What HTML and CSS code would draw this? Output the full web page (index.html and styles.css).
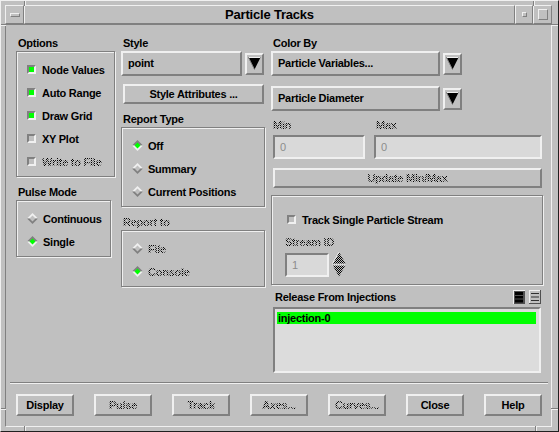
FILE: index.html
```html
<!DOCTYPE html>
<html lang="en">
<head>
  <meta charset="UTF-8" />
  <title>Particle Tracks</title>
  <link rel="stylesheet" href="styles.css">
</head>
<body>

  <div class="window">
    <!-- frame corner marks -->
    <span class="notch notch-v" style="left:23px; top:0;"></span>
    <span class="notch notch-v" style="left:532px; top:0;"></span>
    <span class="notch notch-v notch-b" style="left:23px;"></span>
    <span class="notch notch-v notch-b" style="left:534px;"></span>
    <span class="notch notch-h" style="top:23px; left:0;"></span>
    <span class="notch notch-h notch-r" style="top:23px;"></span>
    <span class="notch notch-h" style="top:407px; left:0;"></span>
    <span class="notch notch-h notch-r" style="top:407px;"></span>

    <!-- Title bar -->
    <div class="titlebar">
      <div class="tb-btn tb-menu"><span class="bevel menu-glyph"></span></div>
      <div class="tb-title">Particle Tracks</div>
      <div class="tb-btn tb-min"><span class="bevel min-glyph"></span></div>
      <div class="tb-btn tb-max"><span class="bevel max-glyph"></span></div>
    </div>

    <div class="dialog">
      <div class="main">

        <!-- Column 1 -->
        <div class="col">
          <div class="label">Options</div>
          <div class="group">
            <div class="row"><span class="check on"></span>Node Values</div>
            <div class="row"><span class="check on"></span>Auto Range</div>
            <div class="row"><span class="check on"></span>Draw Grid</div>
            <div class="row"><span class="check"></span>XY Plot</div>
            <div class="row"><span class="check"></span><span class="dis">Write to File</span></div>
          </div>

          <div class="label label-gap">Pulse Mode</div>
          <div class="group group-pulse">
            <div class="row">
              <svg class="radio" viewBox="0 0 11 11"><polygon class="rt" points="5.5,0 11,5.5 0,5.5"/><polygon class="rb" points="0,5.5 11,5.5 5.5,11"/><polygon class="rc" points="5.5,2.5 8.5,5.5 5.5,8.5 2.5,5.5"/></svg>
              Continuous
            </div>
            <div class="row">
              <svg class="radio on" viewBox="0 0 11 11"><polygon class="rt" points="5.5,0 11,5.5 0,5.5"/><polygon class="rb" points="0,5.5 11,5.5 5.5,11"/><polygon class="rc" points="5.5,2.5 8.5,5.5 5.5,8.5 2.5,5.5"/></svg>
              Single
            </div>
          </div>
        </div>

        <!-- Column 2 -->
        <div class="col">
          <div class="label">Style</div>
          <div class="option">
            <div class="option-field field-style">point</div>
            <div class="option-arrow">
              <svg width="13" height="13" viewBox="0 0 13 13"><polygon points="0.5,0.5 12.5,0.5 6.5,12.5" fill="#000"/><polyline points="0.5,0.5 6.5,12.5" stroke="#808080" fill="none"/><line x1="1" y1="0.5" x2="12" y2="0.5" stroke="#f0f0f0"/></svg>
            </div>
          </div>
          <div class="btn btn-attr">Style Attributes ...</div>

          <div class="label label-gap">Report Type</div>
          <div class="group">
            <div class="row">
              <svg class="radio on" viewBox="0 0 11 11"><polygon class="rt" points="5.5,0 11,5.5 0,5.5"/><polygon class="rb" points="0,5.5 11,5.5 5.5,11"/><polygon class="rc" points="5.5,2.5 8.5,5.5 5.5,8.5 2.5,5.5"/></svg>
              Off
            </div>
            <div class="row">
              <svg class="radio" viewBox="0 0 11 11"><polygon class="rt" points="5.5,0 11,5.5 0,5.5"/><polygon class="rb" points="0,5.5 11,5.5 5.5,11"/><polygon class="rc" points="5.5,2.5 8.5,5.5 5.5,8.5 2.5,5.5"/></svg>
              Summary
            </div>
            <div class="row">
              <svg class="radio" viewBox="0 0 11 11"><polygon class="rt" points="5.5,0 11,5.5 0,5.5"/><polygon class="rb" points="0,5.5 11,5.5 5.5,11"/><polygon class="rc" points="5.5,2.5 8.5,5.5 5.5,8.5 2.5,5.5"/></svg>
              Current Positions
            </div>
          </div>

          <div class="label label-gap"><span class="dis">Report to</span></div>
          <div class="group">
            <div class="row">
              <svg class="radio" viewBox="0 0 11 11"><polygon class="rt" points="5.5,0 11,5.5 0,5.5"/><polygon class="rb" points="0,5.5 11,5.5 5.5,11"/><polygon class="rc" points="5.5,2.5 8.5,5.5 5.5,8.5 2.5,5.5"/></svg>
              <span class="dis">File</span>
            </div>
            <div class="row">
              <svg class="radio on" viewBox="0 0 11 11"><polygon class="rt" points="5.5,0 11,5.5 0,5.5"/><polygon class="rb" points="0,5.5 11,5.5 5.5,11"/><polygon class="rc" points="5.5,2.5 8.5,5.5 5.5,8.5 2.5,5.5"/></svg>
              <span class="dis">Console</span>
            </div>
          </div>
        </div>

        <!-- Column 3 -->
        <div class="col">
          <div class="label">Color By</div>
          <div class="option">
            <div class="option-field field-color">Particle Variables...</div>
            <div class="option-arrow">
              <svg width="13" height="13" viewBox="0 0 13 13"><polygon points="0.5,0.5 12.5,0.5 6.5,12.5" fill="#000"/><polyline points="0.5,0.5 6.5,12.5" stroke="#808080" fill="none"/><line x1="1" y1="0.5" x2="12" y2="0.5" stroke="#f0f0f0"/></svg>
            </div>
          </div>
          <div class="option option-second">
            <div class="option-field field-color">Particle Diameter</div>
            <div class="option-arrow">
              <svg width="13" height="13" viewBox="0 0 13 13"><polygon points="0.5,0.5 12.5,0.5 6.5,12.5" fill="#000"/><polyline points="0.5,0.5 6.5,12.5" stroke="#808080" fill="none"/><line x1="1" y1="0.5" x2="12" y2="0.5" stroke="#f0f0f0"/></svg>
            </div>
          </div>

          <div class="minmax-labels">
            <div class="label mm-min"><span class="dis">Min</span></div>
            <div class="label"><span class="dis">Max</span></div>
          </div>
          <div class="minmax">
            <div class="field field-min"><span class="field-text">0</span></div>
            <div class="field field-max"><span class="field-text">0</span></div>
          </div>
          <div class="btn btn-update"><span class="dis">Update Min/Max</span></div>

          <div class="group group-stream">
            <div class="row"><span class="check"></span>Track Single Particle Stream</div>
            <div class="label stream-label"><span class="dis">Stream ID</span></div>
            <div class="stream-row">
              <div class="field field-stream"><span class="field-text">1</span></div>
              <svg class="spinner" width="14" height="25" viewBox="0 0 14 25">
                <defs>
                  <pattern id="stip" width="2" height="2" patternUnits="userSpaceOnUse">
                    <rect width="2" height="2" fill="#c0c0c0"/>
                    <rect width="1" height="1" fill="#000"/>
                    <rect x="1" y="1" width="1" height="1" fill="#000"/>
                  </pattern>
                </defs>
                <polygon points="7,0 13.5,11.5 0.5,11.5" fill="url(#stip)"/>
                <polyline points="0.5,11.5 7,0" stroke="#f0f0f0" fill="none"/>
                <polygon points="0.5,13 13.5,13 7,24.5" fill="url(#stip)"/>
                <line x1="0.5" y1="13" x2="13.5" y2="13" stroke="#f0f0f0"/>
              </svg>
            </div>
          </div>

          <div class="list-head">
            <div class="label">Release From Injections</div>
            <div class="list-icons">
              <svg width="12" height="14" viewBox="0 0 12 14">
                <rect width="12" height="14" fill="#505050"/>
                <rect x="0" y="0" width="12" height="1" fill="#f0f0f0"/>
                <rect x="0" y="0" width="1" height="14" fill="#f0f0f0"/>
                <rect x="2" y="2" width="8" height="3" fill="#000"/>
                <rect x="2" y="6" width="8" height="2.5" fill="#000"/>
                <rect x="2" y="9.5" width="8" height="3" fill="#000"/>
              </svg>
              <svg width="12" height="14" viewBox="0 0 12 14">
                <rect width="12" height="14" fill="#c0c0c0"/>
                <rect x="0" y="0" width="12" height="1" fill="#f0f0f0"/>
                <rect x="0" y="0" width="1" height="14" fill="#f0f0f0"/>
                <rect x="11" y="0" width="1" height="14" fill="#505050"/>
                <rect x="0" y="13" width="12" height="1" fill="#505050"/>
                <rect x="2" y="3" width="8" height="1" fill="#303030"/>
                <rect x="2" y="6.5" width="8" height="1" fill="#303030"/>
                <rect x="2" y="10" width="8" height="1" fill="#303030"/>
              </svg>
            </div>
          </div>
          <div class="listbox">
            <div class="list-item selected">injection-0</div>
          </div>
        </div>

      </div>

      <div class="separator"></div>

      <div class="actions">
        <div class="btn btn-action">Display</div>
        <div class="btn btn-action"><span class="dis">Pulse</span></div>
        <div class="btn btn-action"><span class="dis">Track</span></div>
        <div class="btn btn-action"><span class="dis">Axes...</span></div>
        <div class="btn btn-action"><span class="dis">Curves...</span></div>
        <div class="btn btn-action">Close</div>
        <div class="btn btn-action">Help</div>
      </div>
    </div>
  </div>

</body>
</html>
```

FILE: styles.css
```css
body {
  margin: 0;
  background-color: #c0c0c0;
  font-family: "Liberation Sans", Arial, sans-serif;
  font-size: 11px;
  font-weight: bold;
  letter-spacing: -0.25px;
  color: #000;
}

.window {
  position: relative;
  width: 559px;
  height: 432px;
  box-sizing: border-box;
  background: #c0c0c0;
  border: 1px solid;
  border-color: #f0f0f0 #202020 #202020 #f0f0f0;
  padding: 4px 6px 4px 4px;
  display: flex;
  flex-direction: column;
}

/* little resize-corner marks on the frame */
.notch {
  position: absolute;
  display: block;
}
.notch-v {
  width: 1px;
  height: 5px;
  background: #808080;
  box-shadow: 1px 0 0 #f0f0f0;
}
.notch-b {
  bottom: 0;
}
.notch-h {
  width: 5px;
  height: 1px;
  background: #808080;
  box-shadow: 0 1px 0 #f0f0f0;
}
.notch-r {
  right: 0;
  width: 7px;
}

/* ---------- title bar ---------- */
.titlebar {
  display: flex;
  height: 19px;
}
.tb-btn,
.tb-title,
.bevel {
  box-sizing: border-box;
  border: 1px solid;
  border-color: #f0f0f0 #808080 #808080 #f0f0f0;
}
.tb-btn {
  display: flex;
  align-items: center;
  justify-content: center;
}
.tb-menu {
  width: 19px;
}
.tb-title {
  flex: 1;
  text-align: center;
  font-size: 13px;
  letter-spacing: -0.2px;
  line-height: 17px;
}
.tb-min {
  width: 18px;
}
.tb-max {
  width: 19px;
}
.menu-glyph {
  width: 10px;
  height: 4px;
}
.min-glyph {
  width: 5px;
  height: 5px;
}
.max-glyph {
  width: 10px;
  height: 11px;
}

/* ---------- dialog ---------- */
.dialog {
  flex: 1;
  display: flex;
  flex-direction: column;
  border: 1px solid;
  border-color: #808080 #f0f0f0 #f0f0f0 #808080;
  padding: 10px 8px 10px 10px;
}
.main {
  display: grid;
  grid-template-columns: 99px 144px 272px;
  column-gap: 6px;
  align-items: start;
}
.col {
  display: flex;
  flex-direction: column;
}

.label {
  height: 16px;
  line-height: 16px;
  padding-left: 2px;
  white-space: nowrap;
}
.label-gap {
  margin-top: 7px;
}

.group {
  border: 1px solid #808080;
  box-shadow: inset 1px 1px 0 #f0f0f0, 1px 1px 0 #f0f0f0;
  padding: 6px 0 3px 10px;
}
.group-pulse {
  width: 83px;
}

.row {
  height: 23px;
  display: flex;
  align-items: center;
  gap: 6px;
  white-space: nowrap;
}

.check {
  width: 9px;
  height: 9px;
  flex: none;
  box-sizing: border-box;
  border: 2px solid;
  border-color: #808080 #f0f0f0 #f0f0f0 #808080;
  background: #c0c0c0;
}
.check.on {
  background: #00ff00;
}

.radio {
  width: 11px;
  height: 11px;
  flex: none;
  margin-right: -1px;
}
.radio .rt { fill: #f0f0f0; }
.radio .rb { fill: #808080; }
.radio .rc { fill: #c0c0c0; }
.radio.on .rt { fill: #808080; }
.radio.on .rb { fill: #f0f0f0; }
.radio.on .rc { fill: #00ff00; }

/* stippled (insensitive) text */
.dis {
  color: transparent;
  background: repeating-conic-gradient(#000 0 25%, transparent 0 50%) 0 0 / 2px 2px;
  -webkit-background-clip: text;
  background-clip: text;
}

/* ---------- option menus ---------- */
.option {
  display: flex;
  align-items: center;
  height: 25px;
}
.option-second {
  margin-top: 10px;
}
.option-field {
  box-sizing: border-box;
  height: 25px;
  border: 2px solid;
  border-color: #f0f0f0 #808080 #808080 #f0f0f0;
  line-height: 21px;
  white-space: nowrap;
}
.field-style {
  width: 121px;
  padding-left: 5px;
}
.field-color {
  width: 169px;
  padding-left: 5px;
}
.option-arrow {
  box-sizing: border-box;
  margin-left: 3px;
  width: 19px;
  height: 22px;
  border: 2px solid;
  border-color: #f0f0f0 #808080 #808080 #f0f0f0;
  display: flex;
  align-items: center;
  justify-content: center;
}

/* ---------- buttons ---------- */
.btn {
  box-sizing: border-box;
  height: 20px;
  border: 2px solid;
  border-color: #f0f0f0 #808080 #808080 #f0f0f0;
  display: flex;
  align-items: center;
  justify-content: center;
  white-space: nowrap;
}
.btn-attr {
  margin: 8px 0 0 2px;
  width: 141px;
}
.btn-update {
  margin: 9px 1px 0 2px;
}

/* ---------- min / max ---------- */
.minmax-labels {
  display: flex;
  margin-top: 6px;
}
.mm-min {
  width: 101px;
}
.minmax {
  display: flex;
  gap: 9px;
  margin: 2px 1px 0 2px;
}
.field {
  box-sizing: border-box;
  height: 24px;
  border: 2px solid;
  border-color: #808080 #f0f0f0 #f0f0f0 #808080;
  background: #d9d9d9;
  padding-left: 5px;
  line-height: 20px;
}
.field-min {
  width: 92px;
}
.field-max {
  flex: 1;
}
.field-text {
  font-weight: normal;
  color: #8c8c8c;
}

/* ---------- single stream box ---------- */
.group-stream {
  margin-top: 7px;
  padding: 12px 0 7px 15px;
}
.stream-label {
  margin: 3px 0 0 -4px;
}
.stream-row {
  display: flex;
  align-items: center;
  gap: 3px;
  margin: 2px 0 0 -2px;
}
.field-stream {
  width: 44px;
}

/* ---------- injections list ---------- */
.list-head {
  display: flex;
  align-items: center;
  justify-content: space-between;
  margin: 4px 2px 0 2px;
}
.list-icons {
  display: flex;
  gap: 4px;
}
.list-icons svg {
  display: block;
}
.listbox {
  box-sizing: border-box;
  height: 66px;
  margin: 2px 2px 0 2px;
  border: 2px solid;
  border-color: #808080 #f0f0f0 #f0f0f0 #808080;
  background: #dcdcdc;
  padding: 3px 3px 0 2px;
}
.list-item {
  height: 12px;
  line-height: 12px;
  padding-left: 1px;
}
.list-item.selected {
  background: #00ff00;
}

/* ---------- bottom ---------- */
.separator {
  margin: auto -5px 10px -6px;
  border-top: 1px solid #808080;
  border-bottom: 1px solid #f0f0f0;
}
.actions {
  display: flex;
  justify-content: space-between;
  padding-right: 1px;
}
.btn-action {
  width: 58px;
  height: 22px;
}
```
